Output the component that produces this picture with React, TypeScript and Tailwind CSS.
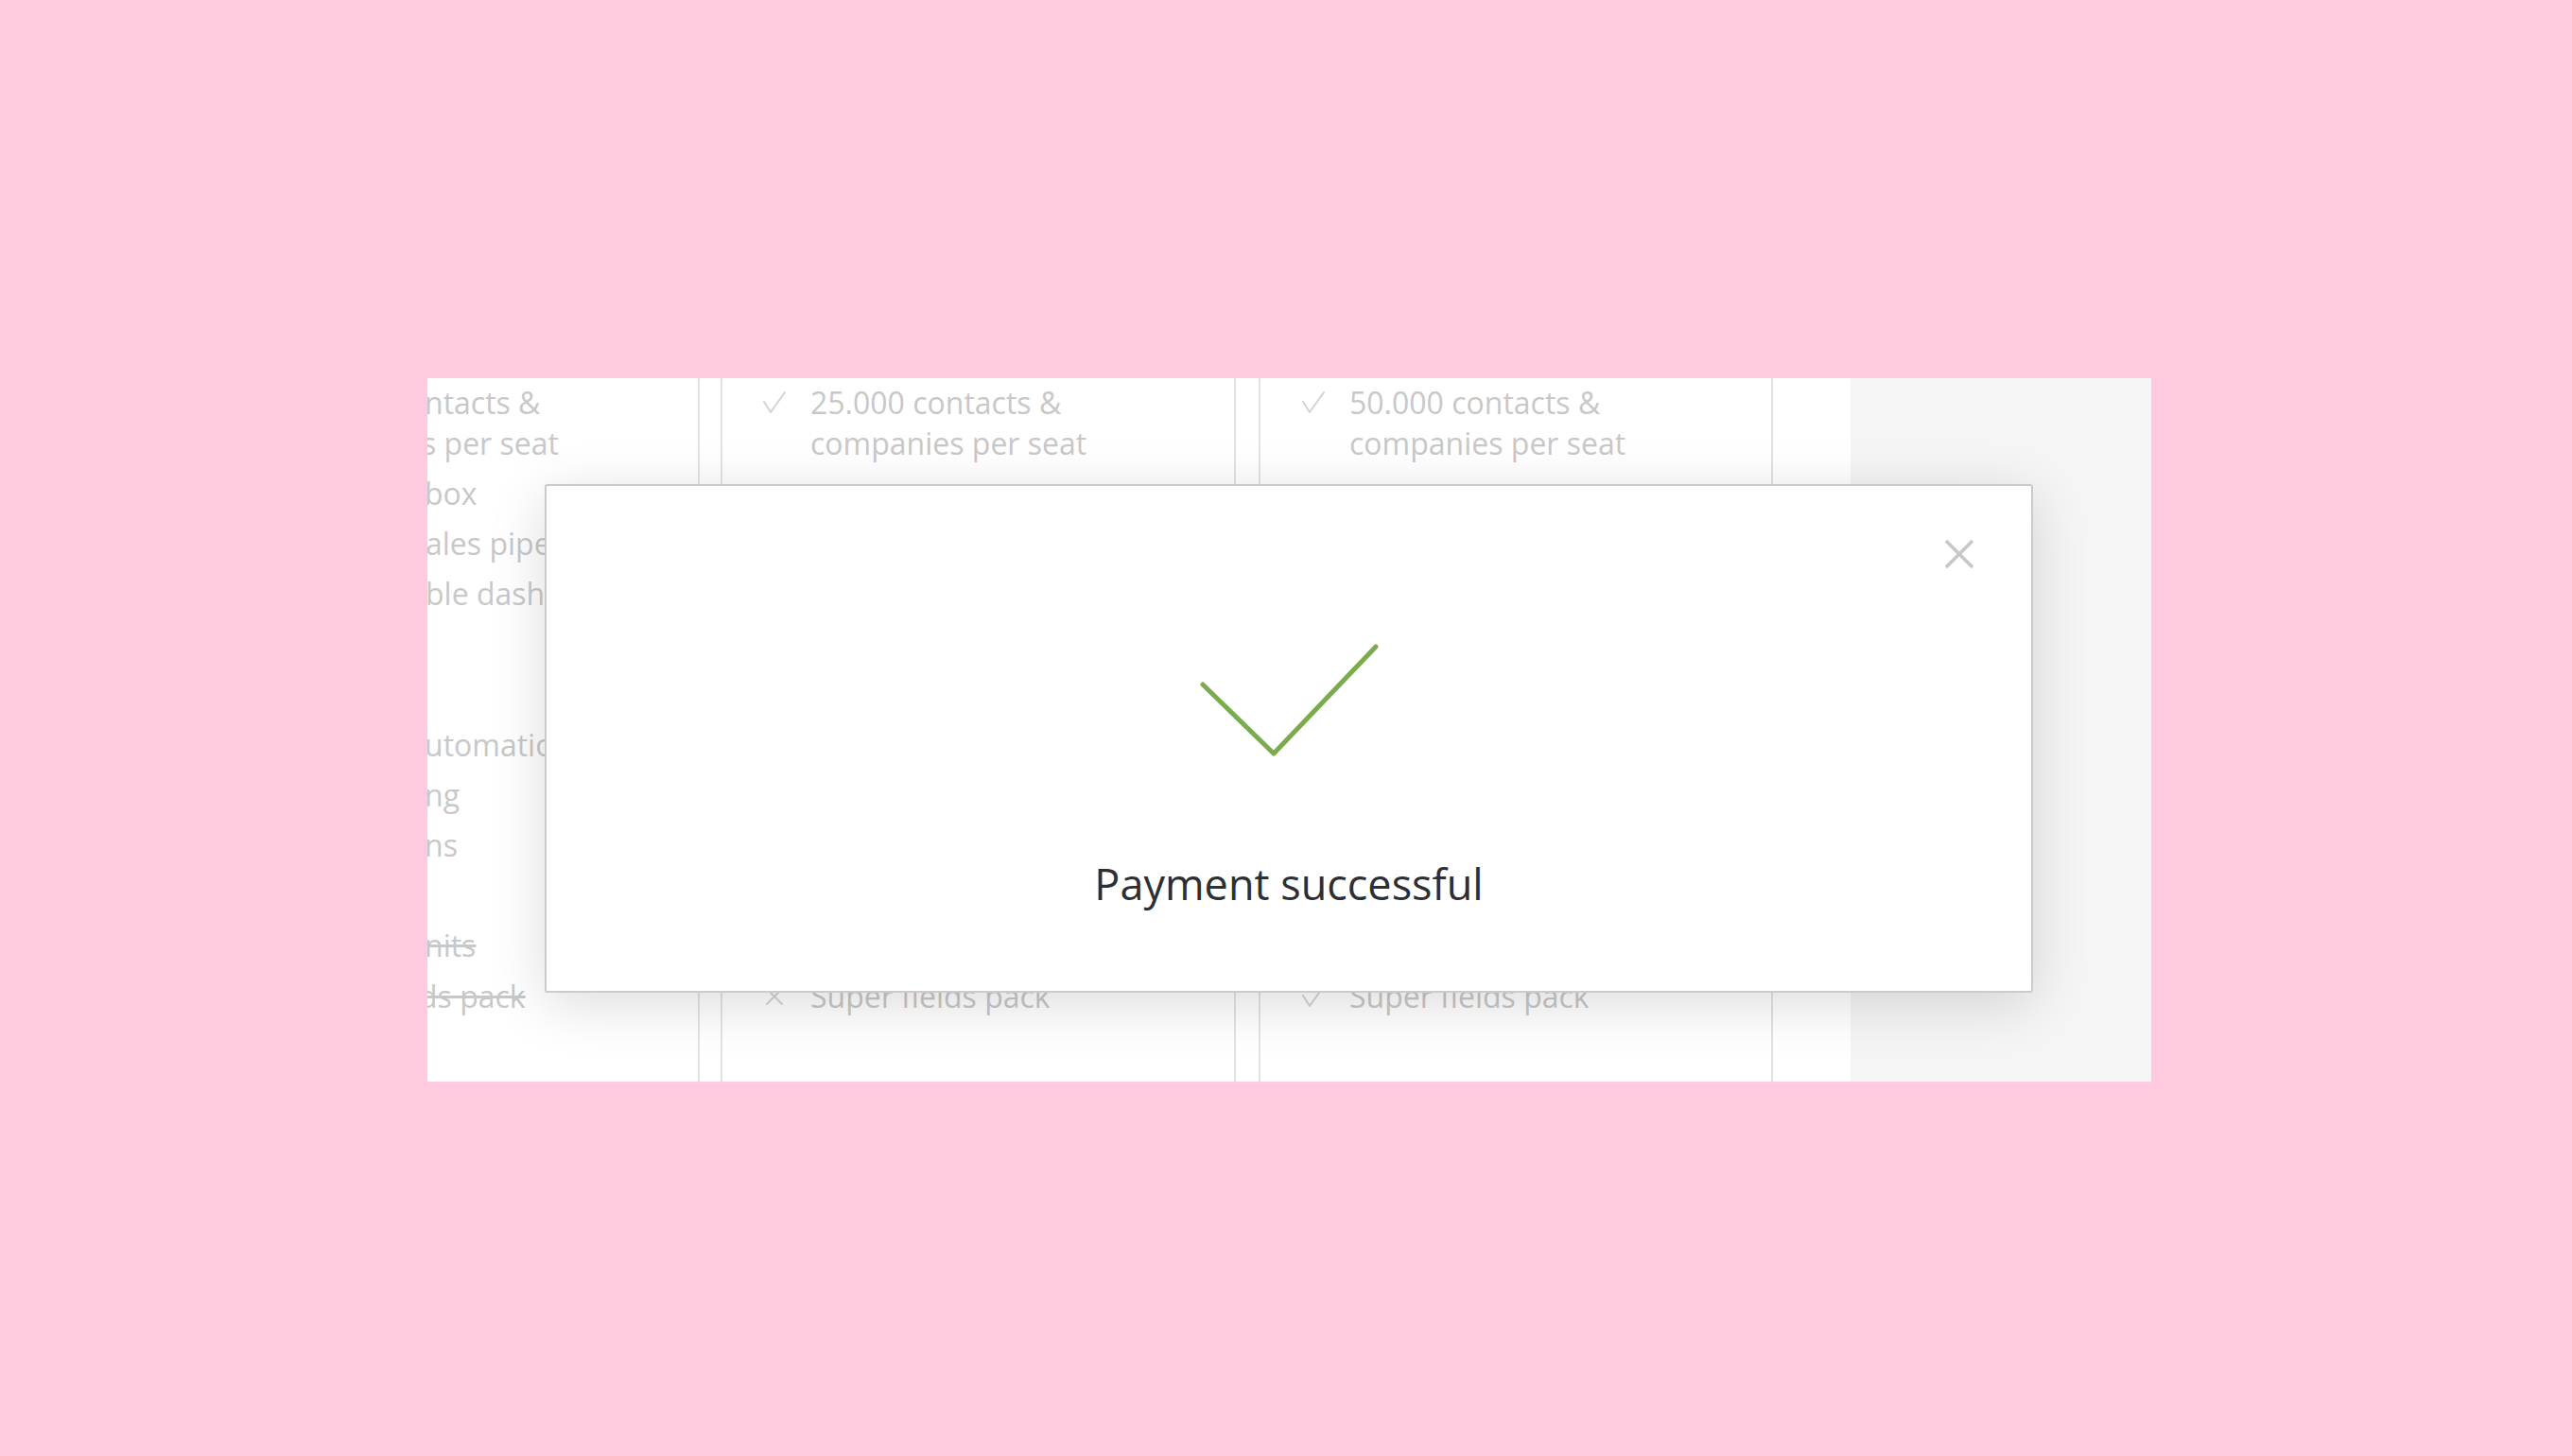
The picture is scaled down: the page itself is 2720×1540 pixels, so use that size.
import React from "react";

const txt = "font-['Open_Sans',sans-serif] text-[32px] leading-[43px] text-[#c8c8c8] whitespace-nowrap";

function SmallCheck() {
  return (
    <svg viewBox="0 0 24 24" className="w-[24px] h-[24px]">
      <polyline points="1,11 8,22 23,1" fill="none" stroke="#d3d3d3" strokeWidth="2" strokeLinecap="round" strokeLinejoin="round" />
    </svg>
  );
}

function SmallCross() {
  return (
    <svg viewBox="0 0 24 24" className="w-[24px] h-[24px]">
      <path d="M4 4 L20 20 M20 4 L4 20" fill="none" stroke="#d3d3d3" strokeWidth="2" strokeLinecap="round" />
    </svg>
  );
}

function Row({ icon, lines, className = "" }: { icon: React.ReactNode; lines: string[]; className?: string }) {
  return (
    <div className={`flex items-start ${className}`}>
      <div className="w-[24px] h-[43px] flex items-center shrink-0">{icon}</div>
      <div className={`ml-[26px] ${txt}`}>
        {lines.map((l) => (
          <div key={l}>{l}</div>
        ))}
      </div>
    </div>
  );
}

export default function App() {
  return (
    <div className="w-full min-h-[1540px] bg-[#ffc9e0] pt-[400px] pl-[452px]">
      <div className="relative w-[1823px] h-[744px] bg-white overflow-hidden flex">
        {/* column 1 (clipped on the left) */}
        <div className="w-[288px] shrink-0 border-r-2 border-[#e3e3e3] pt-[4px] flex flex-col overflow-hidden">
          <div className={txt}>
            <div className="-ml-[3px]">ntacts &amp;</div>
            <div className="-ml-[6px]">s per seat</div>
          </div>
          <div className={`${txt} mt-[10px] -ml-[3px]`}>box</div>
          <div className={`${txt} mt-[10px] -ml-[2px]`}>ales pipeline</div>
          <div className={`${txt} mt-[10px] -ml-[2px]`}>ble dashboards</div>
          <div className={`${txt} mt-[117px] -ml-[3px]`}>utomation</div>
          <div className={`${txt} mt-[10px] -ml-[3px]`}>ng</div>
          <div className={`${txt} mt-[10px] -ml-[3px]`}>ns</div>
          <div className={`${txt} mt-[63px] -ml-[3px] line-through`}>nits</div>
          <div className={`${txt} mt-[11px] -ml-[9px] line-through`}>ds pack</div>
        </div>

        {/* column 2 */}
        <div className="ml-[22px] w-[545px] shrink-0 border-x-2 border-[#e3e3e3] pt-[4px] pl-[43px] flex flex-col">
          <Row icon={<SmallCheck />} lines={["25.000 contacts &", "companies per seat"]} />
          <Row icon={<SmallCross />} lines={["Super fields pack"]} className="mt-[542px]" />
        </div>

        {/* column 3 */}
        <div className="ml-[24px] w-[544px] shrink-0 border-x-2 border-[#e3e3e3] pt-[4px] pl-[44px] flex flex-col">
          <Row icon={<SmallCheck />} lines={["50.000 contacts &", "companies per seat"]} />
          <Row icon={<SmallCheck />} lines={["Super fields pack"]} className="mt-[542px]" />
        </div>

        <div className="w-[82px] shrink-0 bg-white" />
        <div className="flex-1 bg-[#f5f5f5]" />

        {/* modal */}
        <div className="absolute left-[124px] top-[112px] w-[1574px] h-[538px] bg-white border-2 border-[#cbcbcb] rounded-[3px] shadow-[0_12px_60px_rgba(0,0,0,0.14)] flex flex-col items-center">
          <div className="self-stretch flex justify-end pt-[56px] pr-[60px]">
            <button aria-label="Close" className="w-[32px] h-[32px]">
              <svg viewBox="0 0 32 32" className="w-[32px] h-[32px]">
                <path d="M2 2 L30 30 M30 2 L2 30" fill="none" stroke="#c6c6c6" strokeWidth="3.5" />
              </svg>
            </button>
          </div>
          <svg viewBox="0 0 191 121" className="w-[191px] h-[121px] mt-[78px]">
            <polyline points="4,44 79,117 187,4" fill="none" stroke="#7bab4d" strokeWidth="5" strokeLinecap="round" strokeLinejoin="round" />
          </svg>
          <div className="mt-[103px] font-['Open_Sans',sans-serif] text-[45px] leading-[61px] text-[#2c2f33]">
            Payment successful
          </div>
        </div>
      </div>
    </div>
  );
}
